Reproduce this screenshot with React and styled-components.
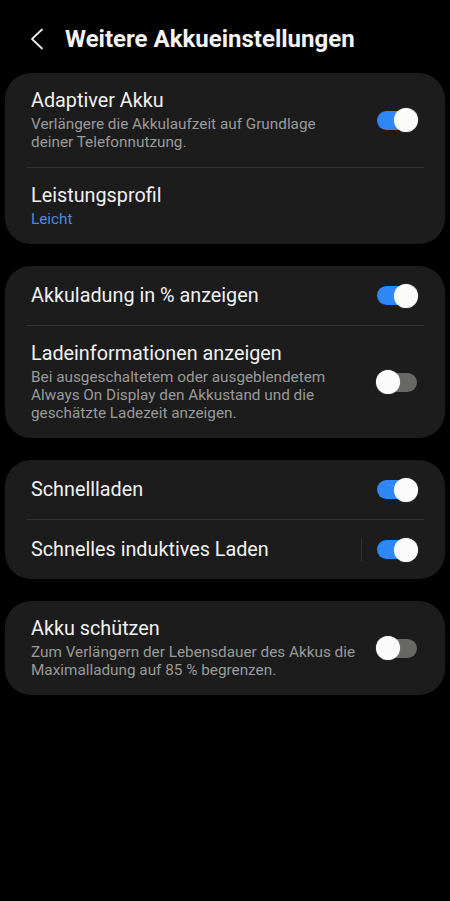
import React from "react";
import styled, { createGlobalStyle } from "styled-components";

const Global = createGlobalStyle`
  html, body { margin: 0; padding: 0; background: #000; }
  body { font-family: Roboto, "Noto Sans", "Liberation Sans", sans-serif; -webkit-font-smoothing: antialiased; }
  * { box-sizing: border-box; }
`;

const Page = styled.div`
  width: 450px;
  min-height: 901px;
  background: #000;
  padding: 0 5px;
`;

const Header = styled.header`
  height: 73px;
  display: flex;
  align-items: center;
  padding-left: 22px;
  padding-top: 5px;
  gap: 18px;
`;

const Back = styled.button`
  width: 20px;
  height: 24px;
  padding: 0;
  border: 0;
  background: none;
  display: flex;
  align-items: center;
  justify-content: center;
`;

const Title = styled.h1`
  margin: 0;
  color: #f4f4f4;
  font-size: 24px;
  font-weight: 700;
`;

const Cards = styled.div`
  display: flex;
  flex-direction: column;
  gap: 22px;
`;

const Card = styled.section`
  background: #1c1c1c;
  border-radius: 26px;
  overflow: hidden;
`;

const Divider = styled.div`
  height: 1px;
  background: #313131;
  margin: 0 21px;
`;

const Row = styled.div`
  min-height: 59px;
  display: flex;
  align-items: center;
  padding: 16px 28px 16px 26px;
`;

const Texts = styled.div`
  flex: 0 1 328px;
  min-width: 0;
  display: flex;
  flex-direction: column;
  gap: 2px;
  margin-right: auto;
`;

const Label = styled.div`
  color: #f2f2f2;
  font-size: 19.8px;
  line-height: 24px;
`;

const Sub = styled.div`
  color: ${(p) => (p.$accent ? "#4d8ae4" : "#9a9a9a")};
  font-size: 15.3px;
  line-height: 18px;
`;

const VSep = styled.div`
  width: 1px;
  height: 23px;
  background: #353535;
  margin-right: 14px;
  flex: none;
`;

const Switch = styled.div`
  position: relative;
  width: 41px;
  height: 24px;
  flex: none;
`;

const Track = styled.div`
  position: absolute;
  left: 1px;
  right: 0;
  top: 2.5px;
  height: 19px;
  border-radius: 10px;
  background: ${(p) => (p.$on ? "#2f86f6" : "#686865")};
`;

const Thumb = styled.div`
  position: absolute;
  top: 0;
  ${(p) => (p.$on ? "right: -1px;" : "left: 0;")}
  width: 24px;
  height: 24px;
  border-radius: 50%;
  background: #fbfbfb;
  box-shadow: 0 0 1px rgba(255, 255, 255, 0.6);
`;

function Toggle({ on }) {
  return (
    <Switch>
      <Track $on={on} />
      <Thumb $on={on} />
    </Switch>
  );
}

function Item({ label, sub, accent, toggle, sep }) {
  return (
    <Row>
      <Texts>
        <Label>{label}</Label>
        {sub && <Sub $accent={accent}>{sub}</Sub>}
      </Texts>
      {sep && <VSep />}
      {toggle !== undefined && <Toggle on={toggle} />}
    </Row>
  );
}

export default function App() {
  return (
    <>
      <Global />
      <Page>
        <Header>
          <Back aria-label="Zurück">
            <svg width="14" height="22" viewBox="0 0 14 22">
              <polyline points="12,1.5 2,11 12,20.5" fill="none" stroke="#eaeaea" strokeWidth="1.8" strokeLinecap="round" strokeLinejoin="round" />
            </svg>
          </Back>
          <Title>Weitere Akkueinstellungen</Title>
        </Header>
        <Cards>
          <Card>
            <Item label="Adaptiver Akku" sub="Verlängere die Akkulaufzeit auf Grundlage deiner Telefonnutzung." toggle={true} />
            <Divider />
            <Item label="Leistungsprofil" sub="Leicht" accent />
          </Card>
          <Card>
            <Item label="Akkuladung in % anzeigen" toggle={true} />
            <Divider />
            <Item
              label="Ladeinformationen anzeigen"
              sub="Bei ausgeschaltetem oder ausgeblendetem Always On Display den Akkustand und die geschätzte Ladezeit anzeigen."
              toggle={false}
            />
          </Card>
          <Card>
            <Item label="Schnellladen" toggle={true} />
            <Divider />
            <Item label="Schnelles induktives Laden" toggle={true} sep />
          </Card>
          <Card>
            <Item
              label="Akku schützen"
              sub="Zum Verlängern der Lebensdauer des Akkus die Maximalladung auf 85 % begrenzen."
              toggle={false}
            />
          </Card>
        </Cards>
      </Page>
    </>
  );
}
